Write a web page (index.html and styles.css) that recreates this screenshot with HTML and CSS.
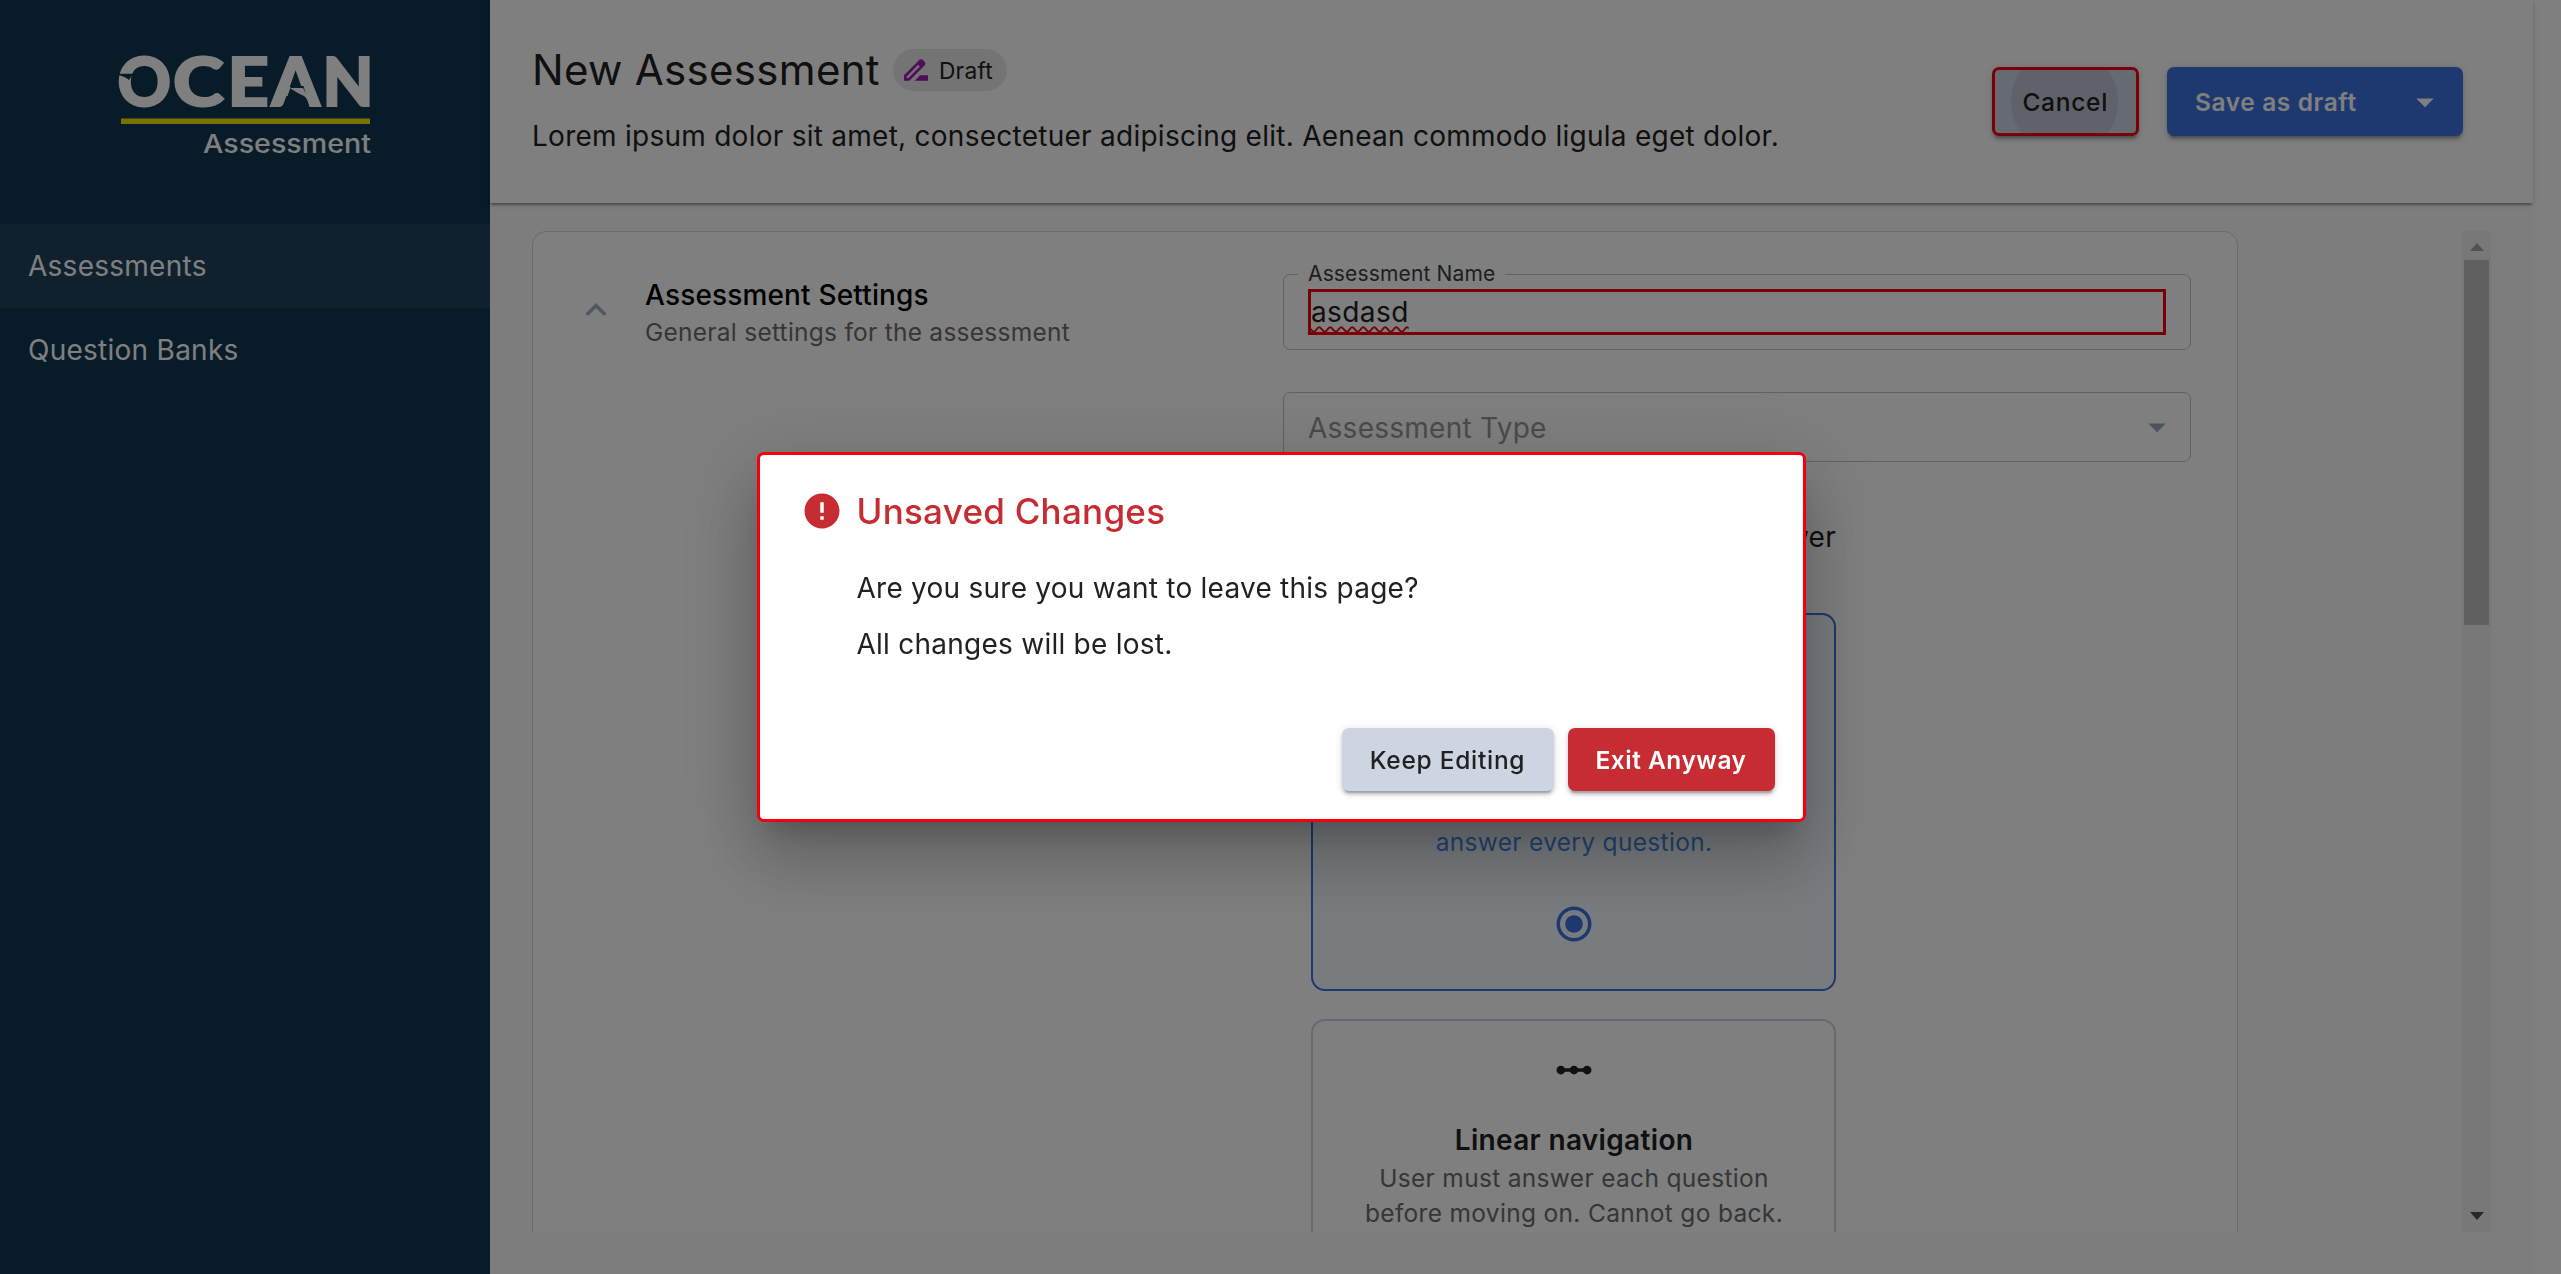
FILE: index.html
```html
<!DOCTYPE html>
<html lang="en">
<head>
<meta charset="utf-8">
<title>New Assessment</title>
<link rel="stylesheet" href="styles.css">
</head>
<body>
<div class="app">
  <aside class="sidebar">
    <div class="brand">
      <svg class="logo" width="264" height="114" viewBox="113 49 264 114" role="img" aria-label="Ocean Assessment">
        <g class="logo-word">
          <text transform="translate(117.500 106.300)">O</text>
          <text transform="translate(173 106.300) scale(1.17 1)">C</text>
          <text transform="translate(227.500 106.300) scale(1.09 1)">E</text>
          <text transform="translate(271.500 106.300) scale(1.04 1)">A</text>
          <text transform="translate(322.500 106.300)">N</text>
        </g>
        <path class="logo-cut" d="M116 73.800H133L129 80Q125 76.500 116 74.600z"/>
        <path class="logo-cut" d="M283.500 108L291 86H303.500L310 108z"/>
        <path class="logo-fin" d="M290.500 88H303L313 107H309.500Q308 99 304 96Q297 93 290.500 88.600z"/>
        <path class="logo-line" d="M121 118.600H370V124H121z"/>
        <text class="logo-sub" x="203" y="153" textLength="168" lengthAdjust="spacingAndGlyphs">Assessment</text>
      </svg>
    </div>
    <nav class="menu">
      <a class="menu-item menu-item-active">Assessments</a>
      <a class="menu-item">Question Banks</a>
    </nav>
  </aside>

  <main class="main">
    <header class="header">
      <div class="heading">
        <div class="title-row">
          <h1 class="title">New Assessment</h1>
          <span class="chip">
            <svg class="chip-icon" viewBox="0 0 24 24"><path d="M18.41 5.8 17.2 4.59c-.78-.78-2.05-.78-2.83 0l-2.68 2.68L3 15.96V20h4.04l8.74-8.74 2.63-2.63c.79-.78.79-2.05 0-2.83zM6.21 18H5v-1.21l8.66-8.66 1.21 1.21L6.21 18zM11 20l4-4h6v4H11z"/></svg>
            Draft
          </span>
        </div>
        <p class="subtitle">Lorem ipsum dolor sit amet, consectetuer adipiscing elit. Aenean commodo ligula eget dolor.</p>
      </div>
      <div class="actions">
        <button class="btn btn-cancel">Cancel</button>
        <button class="btn btn-save">Save as draft
          <svg class="icon" viewBox="0 0 24 24"><path d="M7 10l5 5 5-5z"/></svg>
        </button>
      </div>
    </header>

    <div class="content">
      <div class="scroll-view">
        <section class="card">
          <svg class="icon collapse" viewBox="0 0 24 24"><path d="m12 8-6 6 1.41 1.41L12 10.83l4.59 4.58L18 14z"/></svg>
          <div class="card-heading">
            <h2 class="card-title">Assessment Settings</h2>
            <p class="card-sub">General settings for the assessment</p>
          </div>
          <div class="form">
            <div class="field field-name">
              <label class="field-label">Assessment Name</label>
              <div class="input"><span class="misspelt">asdasd</span></div>
            </div>
            <div class="field field-type">
              <span class="placeholder">Assessment Type</span>
              <svg class="icon" viewBox="0 0 24 24"><path d="M7 10l5 5 5-5z"/></svg>
            </div>
            <div class="options">
              <p class="option-label">Choose how users answer</p>
              <div class="option option-selected">
                <svg class="icon" viewBox="0 0 24 24"><circle cx="5" cy="12" r="3"/><circle cx="12" cy="5" r="3"/><circle cx="19" cy="12" r="3"/></svg>
                <h3 class="option-title">Free navigation</h3>
                <p class="option-text">User can move between<br>questions and need not<br>answer every question.</p>
                <svg class="icon radio" viewBox="0 0 24 24"><path d="M12 7c-2.760 0-5 2.240-5 5s2.240 5 5 5 5-2.240 5-5-2.240-5-5-5zm0-5C6.480 2 2 6.480 2 12s4.480 10 10 10 10-4.480 10-10S17.520 2 12 2zm0 18c-4.420 0-8-3.580-8-8s3.580-8 8-8 8 3.580 8 8-3.580 8-8 8z"/></svg>
              </div>
              <div class="option">
                <svg class="icon" viewBox="0 0 24 24"><circle cx="4.5" cy="12" r="2.5"/><circle cx="12" cy="12" r="2.5"/><circle cx="19.5" cy="12" r="2.5"/><path d="M4.500 11h15v2h-15z"/></svg>
                <h3 class="option-title">Linear navigation</h3>
                <p class="option-text">User must answer each question<br>before moving on. Cannot go back.</p>
              </div>
            </div>
          </div>
        </section>
        <div class="scrollbar">
          <svg class="arrow arrow-up" width="14" height="8" viewBox="0 0 14 8"><path d="M7 0L14 8H0z"/></svg>
          <div class="thumb"></div>
          <svg class="arrow arrow-down" width="14" height="8" viewBox="0 0 14 8"><path d="M0 0H14L7 8z"/></svg>
        </div>
      </div>
    </div>
  </main>
</div>

<div class="backdrop">
  <div class="dialog" role="dialog">
    <div class="dialog-title">
      <svg class="icon" viewBox="0 0 24 24"><path d="M12 2C6.480 2 2 6.480 2 12s4.480 10 10 10 10-4.480 10-10S17.520 2 12 2zm1 15h-2v-2h2v2zm0-4h-2V7h2v6z"/></svg>
      Unsaved Changes
    </div>
    <div class="dialog-body">
      <p>Are you sure you want to leave this page?</p>
      <p>All changes will be lost.</p>
    </div>
    <div class="dialog-actions">
      <button class="btn btn-keep">Keep Editing</button>
      <button class="btn btn-exit">Exit Anyway</button>
    </div>
  </div>
</div>
</body>
</html>
```
FILE: styles.css
```css
* { box-sizing: border-box; margin: 0; padding: 0; }
body {
  font-family: Inter, "Liberation Sans", sans-serif;
  font-size: 28px;
  letter-spacing: 0.26px;
  color: #212121;
  background: #fefefe;
  overflow: hidden;
}
.app { display: flex; height: 1274px; }
.icon { width: 42px; height: 42px; flex: none; fill: currentColor; display: block; }

/* Sidebar */
.sidebar { width: 490px; flex: none; background: #103650; }
.brand { height: 224px; padding: 49px 0 0 113px; }
.logo { display: block; letter-spacing: 0; overflow: visible; }
.logo-word { font: 900 66px Lato, sans-serif; fill: #fff; stroke: #fff; stroke-width: 2; }
.logo-cut { fill: #103650; }
.logo-fin { fill: #fff; }
.logo-line { fill: #f6e600; }
.logo-sub { font: 500 26px Inter, sans-serif; fill: #fff; }
.menu-item { display: block; height: 84px; line-height: 84px; padding-left: 28px; color: #fff; }
.menu-item-active { background: #20435c; }

/* Header */
.main { width: 2043px; flex: none; background: #fafafa; display: flex; flex-direction: column; }
.header {
  height: 203px; padding: 0 70px 0 42px; background: #fefefe;
  display: flex; justify-content: space-between; align-items: center;
  box-shadow: 0 3.5px 1.75px -1.75px rgba(0,0,0,.2), 0 1.75px 1.75px rgba(0,0,0,.14), 0 1.75px 5.25px rgba(0,0,0,.12);
}
.heading { padding-bottom: 4px; }
.title-row { display: flex; align-items: center; gap: 13px; height: 56px; }
.title { font-size: 42px; font-weight: 400; letter-spacing: .31px; line-height: 56px; }
.chip {
  display: flex; align-items: center; height: 42px; width: 114px; padding-left: 7px; gap: 7px;
  border-radius: 21px; background: #e9e9e9; font-size: 22.75px;
}
.chip-icon { width: 32px; height: 32px; fill: #9c1fb0; }
.subtitle { line-height: 42px; margin-top: 17px; letter-spacing: .26px; }
.actions { display: flex; gap: 28.5px; }
.btn {
  border: 0; border-radius: 7px; font: 500 24.5px Inter, sans-serif; letter-spacing: .72px; color: #212121;
  display: flex; align-items: center; justify-content: center;
  box-shadow: 0 5.25px 1.75px -3.5px rgba(0,0,0,.2), 0 3.5px 3.5px rgba(0,0,0,.14), 0 1.75px 8.75px rgba(0,0,0,.12);
}
.btn-cancel {
  width: 146.5px; height: 69px; border: 3px solid #f20010;
  background: radial-gradient(circle at 69.5px 50%, #bfc5d2 53px, #cdd5e3 54px);
}
.btn-save {
  width: 296px; height: 69px; padding: 0 17px 0 28px; justify-content: space-between;
  background: #3c70e0; color: #fff; font-weight: 600; letter-spacing: .6px;
}

/* Scrolling settings area */
.content { padding: 28px 42px; }
.scroll-view { display: flex; justify-content: space-between; height: 1001px; overflow: hidden; }
.card {
  width: 1706px; height: 1100px; padding: 42px 46px 0 42px; display: flex;
  background: #fefefe; border: 1px solid #ced4de; border-radius: 14px;
}
.collapse { margin-top: 15px; color: #a0aec4; }
.card-heading { width: 638px; margin-left: 28px; padding-top: 2px; }
.card-title { font-size: 28px; font-weight: 500; line-height: 38px; letter-spacing: .16px; color: #000; }
.card-sub { font-size: 24.5px; line-height: 37px; color: #6c6c6c; }
.form { width: 908px; }
.field { position: relative; display: flex; align-items: center; border: 1px solid #c2c2c2; border-radius: 7px; padding: 0 24px; }
.field-name { height: 76px; margin-bottom: 42px; }
.field-type { height: 70px; justify-content: space-between; padding-right: 12px; color: #96a6bc; }
.field-label {
  position: absolute; left: 14px; top: -14px; padding: 0 10px; background: #fefefe;
  font-size: 21px; line-height: 26px; letter-spacing: .15px; color: #3c3c3c;
}
.input { flex: 1; height: 46px; border: 3px solid #f20010; line-height: 41px; }
.misspelt { letter-spacing: .4px; text-decoration: underline wavy #f20010 2px; text-underline-offset: 4px; }
.placeholder { color: #969696; padding-top: 2px; }
.options { width: 525px; margin-left: 28px; padding-top: 47px; }
.option-label { line-height: 56px; margin-bottom: 48px; text-align: right; }
.option {
  height: 378px; margin-bottom: 28px; padding-top: 28px; border: 2px solid #ccd5e0; border-radius: 14px;
  display: flex; flex-direction: column; align-items: center; text-align: center;
}
.option-selected { border-color: #3c70e0; background: #f0f8ff; color: #3c70e0; }
.option-title { margin-top: 27.5px; padding-left: 1px; font-size: 28px; font-weight: 600; line-height: 42px; letter-spacing: .33px; }
.option-text { padding-left: 1px; font-size: 24.5px; line-height: 35px; letter-spacing: .32px; color: #6c6c6c; }
.option-selected .option-text { color: #4a84e0; }
.radio { margin-top: 43px; }
.scrollbar { width: 29px; background: #f1f1f1; display: flex; flex-direction: column; align-items: center; }
.arrow-up { margin: 12px 0 9px; fill: #a3a3a3; flex: none; }
.thumb { width: 25px; height: 365px; background: #c1c1c1; }
.arrow-down { margin-top: auto; margin-bottom: 12px; fill: #505050; }

/* Dialog */
.backdrop {
  position: fixed; inset: 0; background: rgba(0,0,0,.5);
  display: flex; align-items: center; justify-content: center; padding-left: 1px;
}
.dialog {
  width: 1049px; height: 370px; padding: 28px; background: #fff; border: 3px solid #f20010; border-radius: 7px;
  box-shadow: 0 19px 26px -12px rgba(0,0,0,.2), 0 42px 67px 5px rgba(0,0,0,.14), 0 16px 80px 14px rgba(0,0,0,.12);
}
.dialog-title {
  display: flex; align-items: center; gap: 14px; height: 56px; padding-left: 13px;
  font-size: 35px; font-weight: 500; color: #c62c31;
}
.dialog-body { padding: 21px 0 0 69px; line-height: 56px; letter-spacing: .25px; }
.dialog-actions { display: flex; justify-content: flex-end; gap: 14px; margin-top: 56px; }
.btn-keep { width: 212px; height: 63px; background: #cdd5e3; }
.btn-exit { width: 207px; height: 63px; background: #c62c31; color: #fff; font-weight: 600; letter-spacing: .5px; }
```
